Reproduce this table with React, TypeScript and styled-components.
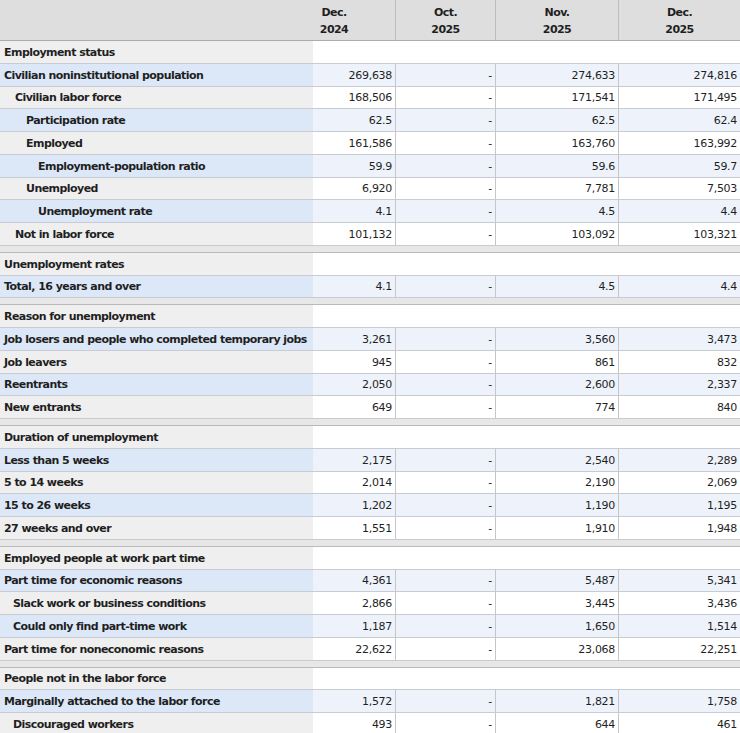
import React from "react";
import styled, { createGlobalStyle, css } from "styled-components";

type Tone = "blue" | "plain";

interface DataRow {
  label: string;
  indent: number;
  values: string[];
}

interface Section {
  title: string;
  rows: DataRow[];
}

const columns = ["Dec.|2024", "Oct.|2025", "Nov.|2025", "Dec.|2025"];

const sections: Section[] = [
  {
    title: "Employment status",
    rows: [
      { label: "Civilian noninstitutional population", indent: 4, values: ["269,638", "-", "274,633", "274,816"] },
      { label: "Civilian labor force", indent: 15, values: ["168,506", "-", "171,541", "171,495"] },
      { label: "Participation rate", indent: 26, values: ["62.5", "-", "62.5", "62.4"] },
      { label: "Employed", indent: 26, values: ["161,586", "-", "163,760", "163,992"] },
      { label: "Employment-population ratio", indent: 38, values: ["59.9", "-", "59.6", "59.7"] },
      { label: "Unemployed", indent: 26, values: ["6,920", "-", "7,781", "7,503"] },
      { label: "Unemployment rate", indent: 38, values: ["4.1", "-", "4.5", "4.4"] },
      { label: "Not in labor force", indent: 15, values: ["101,132", "-", "103,092", "103,321"] },
    ],
  },
  {
    title: "Unemployment rates",
    rows: [{ label: "Total, 16 years and over", indent: 4, values: ["4.1", "-", "4.5", "4.4"] }],
  },
  {
    title: "Reason for unemployment",
    rows: [
      { label: "Job losers and people who completed temporary jobs", indent: 4, values: ["3,261", "-", "3,560", "3,473"] },
      { label: "Job leavers", indent: 4, values: ["945", "-", "861", "832"] },
      { label: "Reentrants", indent: 4, values: ["2,050", "-", "2,600", "2,337"] },
      { label: "New entrants", indent: 4, values: ["649", "-", "774", "840"] },
    ],
  },
  {
    title: "Duration of unemployment",
    rows: [
      { label: "Less than 5 weeks", indent: 4, values: ["2,175", "-", "2,540", "2,289"] },
      { label: "5 to 14 weeks", indent: 4, values: ["2,014", "-", "2,190", "2,069"] },
      { label: "15 to 26 weeks", indent: 4, values: ["1,202", "-", "1,190", "1,195"] },
      { label: "27 weeks and over", indent: 4, values: ["1,551", "-", "1,910", "1,948"] },
    ],
  },
  {
    title: "Employed people at work part time",
    rows: [
      { label: "Part time for economic reasons", indent: 4, values: ["4,361", "-", "5,487", "5,341"] },
      { label: "Slack work or business conditions", indent: 13, values: ["2,866", "-", "3,445", "3,436"] },
      { label: "Could only find part-time work", indent: 13, values: ["1,187", "-", "1,650", "1,514"] },
      { label: "Part time for noneconomic reasons", indent: 4, values: ["22,622", "-", "23,068", "22,251"] },
    ],
  },
  {
    title: "People not in the labor force",
    rows: [
      { label: "Marginally attached to the labor force", indent: 4, values: ["1,572", "-", "1,821", "1,758"] },
      { label: "Discouraged workers", indent: 13, values: ["493", "-", "644", "461"] },
    ],
  },
];

const GlobalStyle = createGlobalStyle`
  body {
    margin: 0;
    background: #ffffff;
    font-family: "DejaVu Sans", Verdana, sans-serif;
    color: #1f1f1f;
  }
`;

const Sheet = styled.div`
  width: 740px;
  height: 733px;
  overflow: hidden;
  font-size: 11px;
  letter-spacing: -0.55px;
`;

const HeaderRow = styled.div`
  display: grid;
  grid-template-columns: 273px 122px 100px 123px 122px;
  height: 41px;
  box-sizing: border-box;
  background: #dedede;
  border-bottom: 1px solid #acacac;
`;

const HeadCell = styled.div<{ $divider?: boolean }>`
  display: flex;
  flex-direction: column;
  align-items: center;
  justify-content: center;
  padding-top: 2px;
  font-weight: bold;
  line-height: 17px;
  ${(p) =>
    p.$divider &&
    css`
      border-left: 1px solid #bdbdbd;
    `}
`;

const Row = styled.div`
  display: grid;
  grid-template-columns: 313px 82px 100px 123px 122px;
  height: 22.75px;
  box-sizing: border-box;
  border-bottom: 1px solid #c8ccd2;
`;

const Label = styled.div<{ $tone: Tone; $indent: number }>`
  display: flex;
  align-items: center;
  padding: 1px 0 0 ${(p) => p.$indent}px;
  font-weight: bold;
  white-space: nowrap;
  background: ${(p) => (p.$tone === "blue" ? "#dce8f8" : "#efefef")};
`;

const Value = styled.div<{ $tone: Tone; $divider?: boolean }>`
  display: flex;
  align-items: center;
  justify-content: flex-end;
  padding: 1px 3px 0 0;
  letter-spacing: -0.3px;
  background: ${(p) => (p.$tone === "blue" ? "#eef3fb" : "#ffffff")};
  ${(p) =>
    p.$divider &&
    css`
      border-left: 1px solid #c6c6c6;
    `}
`;

const BlankSpan = styled.div`
  grid-column: 2 / -1;
  background: #ffffff;
`;

const Band = styled.div`
  height: 7px;
  box-sizing: border-box;
  background: #e7e7e7;
  border-bottom: 1px solid #bababa;
`;

function SectionBlock({ section }: { section: Section }) {
  return (
    <>
      <Row>
        <Label $tone="plain" $indent={4}>
          {section.title}
        </Label>
        <BlankSpan />
      </Row>
      {section.rows.map((row, i) => {
        const tone: Tone = i % 2 === 0 ? "blue" : "plain";
        return (
          <Row key={row.label}>
            <Label $tone={tone} $indent={row.indent}>
              {row.label}
            </Label>
            {row.values.map((v, j) => (
              <Value key={j} $tone={tone} $divider={j > 0}>
                {v}
              </Value>
            ))}
          </Row>
        );
      })}
    </>
  );
}

export default function App() {
  return (
    <>
      <GlobalStyle />
      <Sheet>
        <HeaderRow>
          <HeadCell />
          {columns.map((c, i) => {
            const [month, year] = c.split("|");
            return (
              <HeadCell key={c} $divider={i > 0}>
                <span>{month}</span>
                <span>{year}</span>
              </HeadCell>
            );
          })}
        </HeaderRow>
        {sections.map((s, i) => (
          <React.Fragment key={s.title}>
            {i > 0 && <Band />}
            <SectionBlock section={s} />
          </React.Fragment>
        ))}
      </Sheet>
    </>
  );
}
